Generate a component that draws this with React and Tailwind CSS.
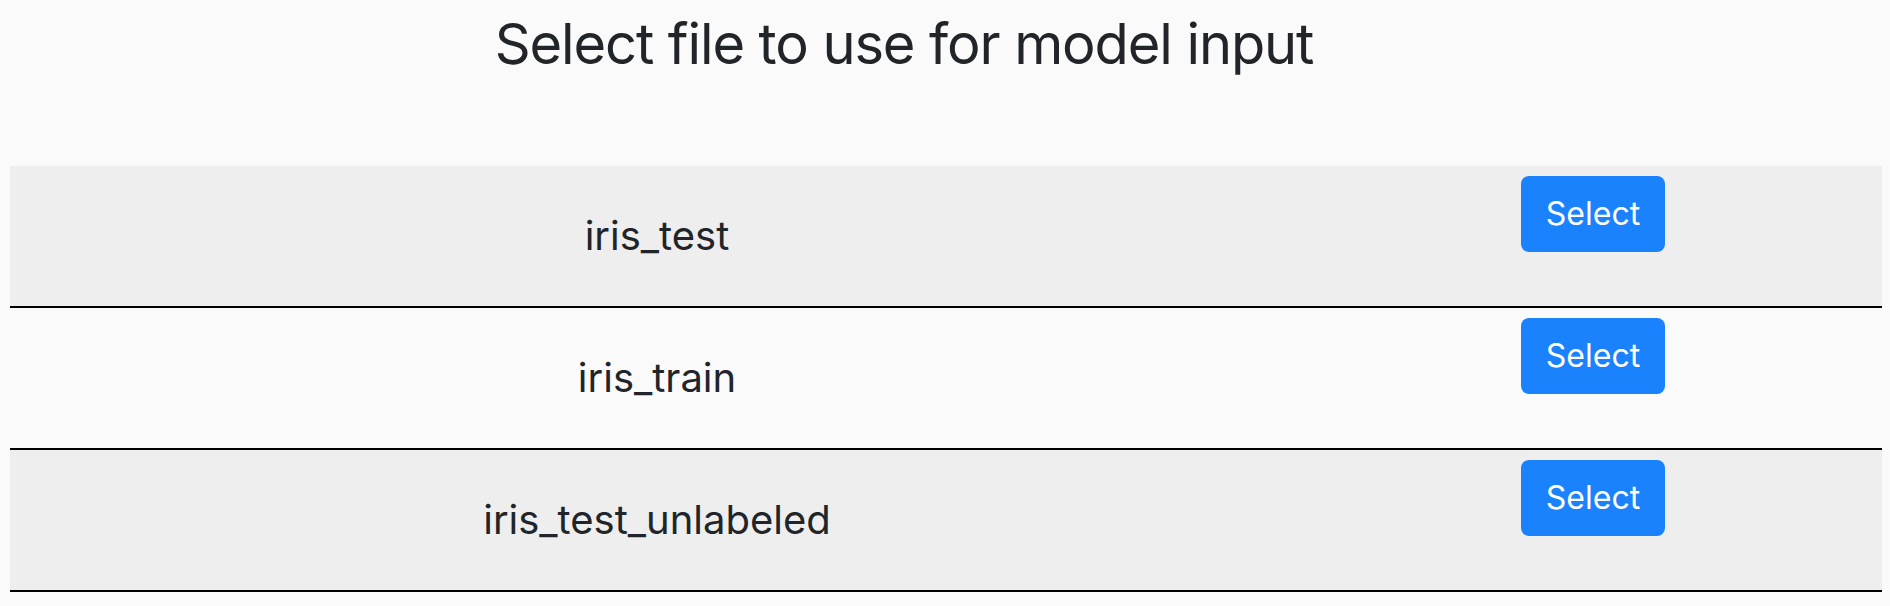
import React from 'react';

const files = ['iris_test', 'iris_train', 'iris_test_unlabeled'];

function FileRow({ name, index }) {
  const shade = index % 2 === 0 ? 'bg-[#eeeeee]' : 'bg-[#fafafa]';
  return (
    <div className={`grid grid-cols-[1294px_1fr] border-b-2 border-black ${shade}`}>
      <div className="py-[40px] text-center text-[40px] leading-[60px] text-[#212529]">{name}</div>
      <div className="flex justify-center items-start pt-[10px]">
        <button className="w-[144px] h-[76px] rounded-[8px] bg-[#1a82fc] text-white text-[32px] leading-[48px]">
          Select
        </button>
      </div>
    </div>
  );
}

export default function App() {
  return (
    <div className="min-h-screen bg-[#fafafa] font-['Inter','Liberation_Sans',sans-serif]">
      <h3 className="pt-[11px] pr-[82px] text-center text-[56px] leading-[1.2] tracking-[-1.1px] font-normal text-[#212529]">
        Select file to use for model input
      </h3>
      <div className="mt-[88px] ml-[10px] mr-[8px]">
        {files.map((f, i) => (
          <FileRow key={f} name={f} index={i} />
        ))}
      </div>
    </div>
  );
}
